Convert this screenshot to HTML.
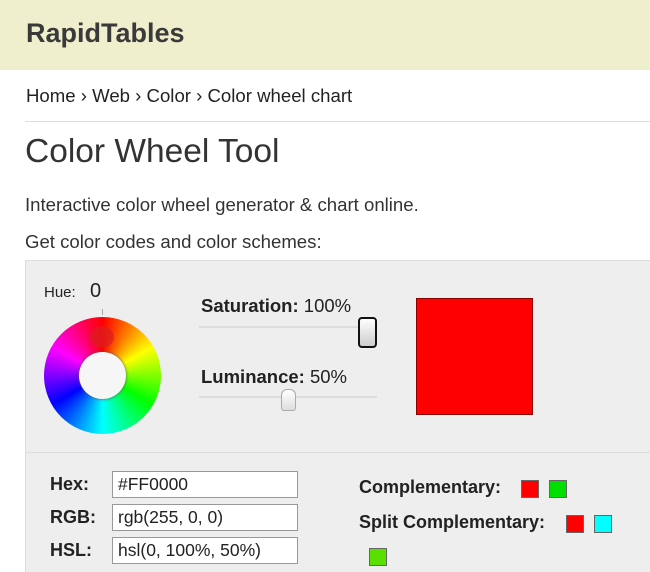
<!DOCTYPE html>
<html><head><meta charset="utf-8"><style>
*{margin:0;padding:0;box-sizing:border-box}
body{width:650px;height:572px;overflow:hidden;background:#fff;font-family:"Liberation Sans",Arial,sans-serif;color:#222;position:relative}
.a{position:absolute;white-space:nowrap}
.hdr{left:0;top:0;width:650px;height:70px;background:#efeecd}
.b{font-weight:bold}
.inp{position:absolute;left:112px;width:186px;height:27px;background:#fff;border:1px solid #999;font-size:17.5px;padding:2px 5px;color:#222}
.sw{position:absolute;width:18px;height:18px;border:1px solid #666}
</style></head><body>
<div class="a hdr"></div>
<div class="a b" style="left:26px;top:18px;font-size:27px;color:#3a3a3a">RapidTables</div>
<div class="a" style="left:26px;top:85px;font-size:18.6px">Home › Web › Color › Color wheel chart</div>
<div class="a" style="left:25px;top:121px;width:625px;height:1px;background:#ddd"></div>
<div class="a" style="left:25px;top:133px;font-size:33.5px;color:#333">Color Wheel Tool</div>
<div class="a" style="left:25px;top:194px;font-size:18.6px;color:#333">Interactive color wheel generator &amp; chart online.</div>
<div class="a" style="left:25px;top:231px;font-size:18.6px;color:#333">Get color codes and color schemes:</div>
<div class="a" style="left:25px;top:260px;width:625px;height:312px;background:#eee;border-top:1px solid #ddd;border-left:1px solid #ddd"></div>
<div class="a" style="left:25px;top:452px;width:625px;height:1px;background:#ddd"></div>
<div class="a" style="left:44px;top:284px;font-size:15px">Hue:</div>
<div class="a" style="left:90px;top:280px;font-size:20px">0</div>
<div class="a" style="left:102px;top:309px;width:1px;height:6px;background:#aaa"></div>
<div class="a" style="left:44px;top:317px;width:117px;height:117px;border-radius:50%;background:conic-gradient(red,#ff8000 30deg,yellow 60deg,lime 120deg,cyan 180deg,blue 240deg,magenta 300deg,red)"></div>
<div class="a" style="left:90px;top:326px;width:24px;height:22px;border-radius:50%;background:#d82020;opacity:.7"></div>
<div class="a" style="left:79px;top:352px;width:47px;height:47px;border-radius:50%;background:#f6f6f6;box-shadow:0 0 3px #555"></div>
<div class="a" style="left:201px;top:295px;font-size:18.5px"><b>Saturation:</b> 100%</div>
<div class="a" style="left:199px;top:326px;width:178px;height:2px;background:#ddd"></div>
<div class="a" style="left:358px;top:317px;width:19px;height:31px;border:2px solid #111;border-radius:4px;background:linear-gradient(#fff,#ccc)"></div>
<div class="a" style="left:201px;top:366px;font-size:18.5px"><b>Luminance:</b> 50%</div>
<div class="a" style="left:199px;top:396px;width:178px;height:2px;background:#ddd"></div>
<div class="a" style="left:281px;top:389px;width:15px;height:22px;border:1px solid #aaa;border-radius:6px 6px 3px 3px;background:linear-gradient(#fff,#ddd)"></div>
<div class="a" style="left:416px;top:298px;width:117px;height:117px;background:red;border:1px solid #800"></div>
<div class="a b" style="left:50px;top:474px;font-size:18px">Hex:</div>
<div class="a b" style="left:50px;top:507px;font-size:18px">RGB:</div>
<div class="a b" style="left:50px;top:540px;font-size:18px">HSL:</div>
<div class="inp" style="top:471px">#FF0000</div>
<div class="inp" style="top:504px">rgb(255, 0, 0)</div>
<div class="inp" style="top:537px">hsl(0, 100%, 50%)</div>
<div class="a b" style="left:359px;top:477px;font-size:18px">Complementary:</div>
<div class="sw" style="left:521px;top:480px;background:red"></div>
<div class="sw" style="left:549px;top:480px;background:#00e000"></div>
<div class="a b" style="left:359px;top:512px;font-size:18px">Split Complementary:</div>
<div class="sw" style="left:566px;top:515px;background:red"></div>
<div class="sw" style="left:594px;top:515px;background:cyan"></div>
<div class="sw" style="left:369px;top:548px;background:#5ae000"></div>
</body></html>
